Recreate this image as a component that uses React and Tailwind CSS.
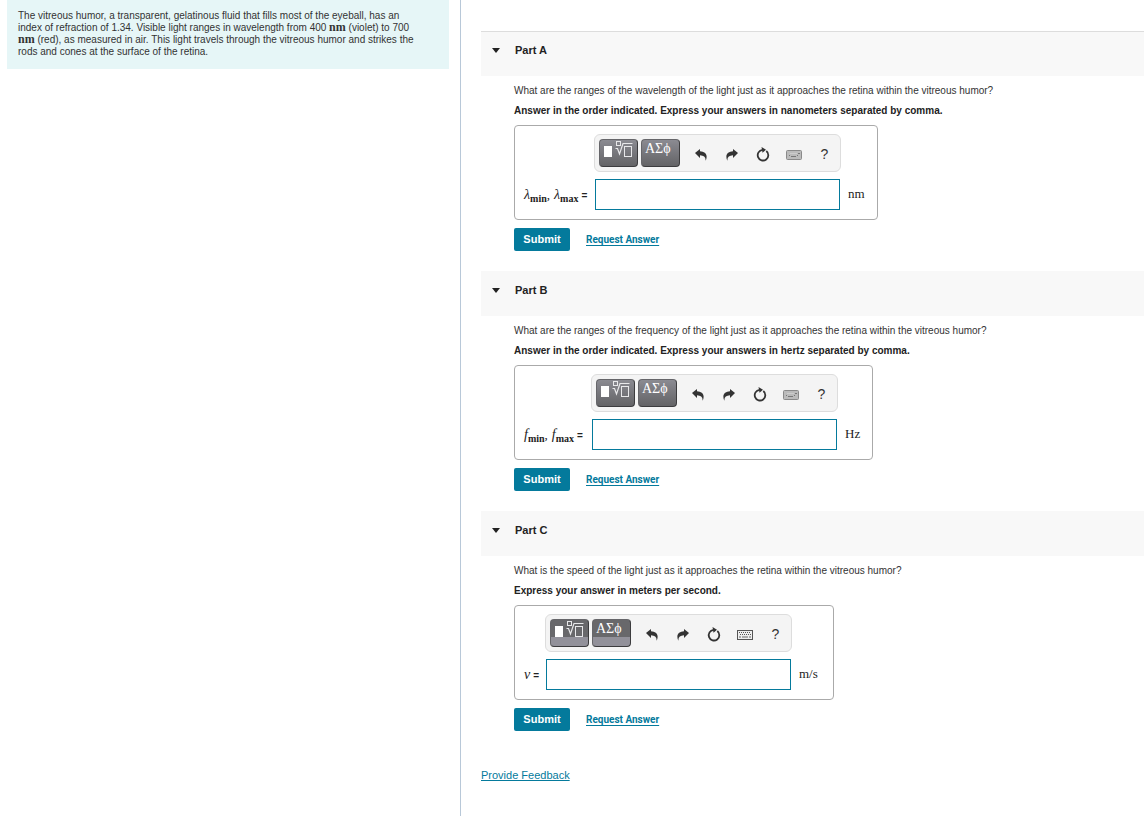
import clsx from "clsx";

const parts = [
  {
    id: "a",
    title: "Part A",
    question:
      "What are the ranges of the wavelength of the light just as it approaches the retina within the vitreous humor?",
    instructions:
      "Answer in the order indicated. Express your answers in nanometers separated by comma.",
    symbols: [
      { base: "λ", sub: "min" },
      { base: "λ", sub: "max" },
    ],
    labelWidth: "w-[70px]",
    unit: "nm",
    unitWidth: "w-[27px]",
  },
  {
    id: "b",
    title: "Part B",
    question:
      "What are the ranges of the frequency of the light just as it approaches the retina within the vitreous humor?",
    instructions:
      "Answer in the order indicated. Express your answers in hertz separated by comma.",
    symbols: [
      { base: "f", sub: "min" },
      { base: "f", sub: "max" },
    ],
    labelWidth: "w-[67px]",
    unit: "Hz",
    unitWidth: "w-[25px]",
  },
  {
    id: "c",
    title: "Part C",
    question:
      "What is the speed of the light just as it approaches the retina within the vitreous humor?",
    instructions: "Express your answer in meters per second.",
    symbols: [{ base: "v" }],
    labelWidth: "w-[21px]",
    unit: "m/s",
    unitWidth: "w-[32px]",
    fullKeyboard: true,
  },
];

function TemplatesIcon() {
  return (
    <svg width="30" height="20" viewBox="0 0 30 20" fill="none" stroke="#e8e8ea">
      <rect x="1" y="6" width="8" height="11" fill="#fff" stroke="none" />
      <rect x="13.5" y="1.5" width="4" height="4" />
      <path d="M12.5 8.500h2l2 5.500 3.500-10.500h9.500" strokeWidth="1.200" />
      <rect x="21.5" y="6.5" width="7" height="10" />
    </svg>
  );
}

function UndoIcon() {
  return (
    <svg width="12" height="12" viewBox="0 0 12 12" fill="#333">
      <path d="M0 4 5 0v2.200c5.200.2 8.400 3.600 5.600 9.800C11 8.400 9 6.500 5 6.300V9z" />
    </svg>
  );
}

function RedoIcon() {
  return (
    <svg width="12" height="12" viewBox="0 0 12 12" fill="#333">
      <path d="M12 4 7 0v2.200C1.800 2.400-1.400 5.800 1.400 12 1 8.400 3 6.500 7 6.300V9z" />
    </svg>
  );
}

function ResetIcon() {
  return (
    <svg width="14" height="15" viewBox="0 0 14 15" fill="none">
      <path d="M10.300 4A5.300 5.300 0 1 1 6.500 2.900" stroke="#333" strokeWidth="1.800" />
      <path d="M5.500 0 10 2.700 6.500 5.800z" fill="#333" />
    </svg>
  );
}

function KeyboardIcon({ full }) {
  if (full) {
    return (
      <svg width="16" height="10" viewBox="0 0 16 10" fill="none">
        <rect x=".5" y=".5" width="15" height="9" fill="#eee" stroke="#555" />
        <path d="M2 2.500h12M3 4.500h11" stroke="#555" strokeDasharray="1 1" />
        <path d="M2 7h2M5 7h6M12 7h2" stroke="#666" />
      </svg>
    );
  }
  return (
    <svg width="16" height="10" viewBox="0 0 16 10" fill="none">
      <rect x=".5" y=".5" width="15" height="9" rx="1" fill="#bbb" stroke="#8a8a8a" />
      <path d="M3 5.500h1M12 3.500h2M5 6.500h5M11 5.500h1" stroke="#777" />
      <path d="M4 3.500h7" stroke="#ccc" />
    </svg>
  );
}

function PaletteButton({ label, split, children }) {
  return (
    <button
      type="button"
      aria-label={label}
      className={clsx(
        "flex h-7 w-[39px] items-start justify-start rounded border border-[#3c3c3e] border-t-[#66666a] border-l-[#66666a] pl-[3px] text-white",
        split
          ? "bg-linear-to-b from-[#68686b] from-65% to-[#92919a] to-65%"
          : "bg-linear-to-b from-[#8b8b92] to-[#636366]"
      )}
    >
      {children}
    </button>
  );
}

function ToolButton({ label, children }) {
  return (
    <button
      type="button"
      aria-label={label}
      className="flex h-7 w-[31px] items-center justify-center pt-[3px] text-[#333]"
    >
      {children}
    </button>
  );
}

function Toolbar({ full }) {
  return (
    <div className="flex h-[38px] w-[247px] items-center rounded-md border border-[#ddd] bg-[#f4f4f4] pl-1">
      <div className="mr-[5px] flex gap-[3px]">
        <PaletteButton label="Templates" split={full}>
          <TemplatesIcon />
        </PaletteButton>
        <PaletteButton label="Symbols" split={full}>
          <span className="font-['Liberation_Serif',serif] text-[14px] leading-[18px]">ΑΣϕ</span>
        </PaletteButton>
      </div>
      <ToolButton label="Undo">
        <UndoIcon />
      </ToolButton>
      <ToolButton label="Redo">
        <RedoIcon />
      </ToolButton>
      <ToolButton label="Reset">
        <ResetIcon />
      </ToolButton>
      <ToolButton label="Keyboard shortcuts">
        <KeyboardIcon full={full} />
      </ToolButton>
      <ToolButton label="Help">
        <span className="text-[14px]">?</span>
      </ToolButton>
    </div>
  );
}

function MathLabel({ symbols }) {
  return (
    <>
      {symbols.map((s, i) => (
        <span key={i} className="font-['Liberation_Serif',serif]">
          <i className="text-[14px]">{s.base}</i>
          {s.sub && <sub className="bottom-[-3px] text-[10px] font-bold">{s.sub}</sub>}
          {i < symbols.length - 1 && <span className="mr-1 text-[13px]">,</span>}
        </span>
      ))}
      <span className="ml-[3px] text-[10px] font-bold">=</span>
    </>
  );
}

function AnswerBox({ part }) {
  return (
    <div className="flex w-fit items-end rounded border border-[#aaa] px-[9px] pt-2 pb-[9px]">
      <label
        htmlFor={`answer-${part.id}`}
        className={clsx("flex h-8 shrink-0 items-center pb-px whitespace-nowrap text-[#222]", part.labelWidth)}
      >
        <span>
          <MathLabel symbols={part.symbols} />
        </span>
      </label>
      <div>
        <Toolbar full={part.fullKeyboard} />
        <input
          id={`answer-${part.id}`}
          type="text"
          className="mx-px mt-[7px] block h-[31px] w-[245px] border border-[#047a9c] bg-white px-2 text-sm outline-none"
        />
      </div>
      <span
        className={clsx(
          "flex h-8 items-center pb-px pl-[7px] font-['Liberation_Serif',serif] text-[13px] text-[#222]",
          part.unitWidth
        )}
      >
        {part.unit}
      </span>
    </div>
  );
}

function Part({ part }) {
  return (
    <section className="mb-5 border-t border-[#f8f8f8] first:border-[#ddd]">
      <h2 className="flex h-11 items-start bg-[#f8f8f8] pt-[10px] pl-[11px] text-[11px] leading-4 font-bold text-[#222]">
        <button type="button" className="flex items-center gap-[15px]">
          <svg width="8" height="5" viewBox="0 0 8 5" fill="#222">
            <path d="M0 0h8L4 5z" />
          </svg>
          {part.title}
        </button>
      </h2>
      <div className="pl-[33px]">
        <p className="mt-[9px] text-[10px] leading-3">{part.question}</p>
        <p className="my-2 text-[10px] leading-3 font-bold text-[#222]">{part.instructions}</p>
        <AnswerBox part={part} />
        <div className="mt-2 flex items-center gap-4">
          <button type="button" className="h-[23px] w-14 rounded-xs bg-[#047a9c] text-[11px] font-bold text-white">
            Submit
          </button>
          <a
            href="#request"
            className="font-[Roboto,sans-serif] text-[10px] font-bold text-[#047a9c] underline underline-offset-2"
          >
            Request Answer
          </a>
        </div>
      </div>
    </section>
  );
}

function Unit({ children }) {
  return <span className="font-['Liberation_Serif',serif] text-[12px] leading-[10px] font-bold">{children}</span>;
}

export default function App() {
  return (
    <div className="grid min-h-screen grid-cols-[461px_minmax(0,1fr)] bg-white font-['Liberation_Sans',Arial,sans-serif] text-[#333]">
      <aside className="border-r border-[#b8c8d8] pr-[11px] pl-[7px]">
        <p className="bg-[#e6f6f7] px-[11px] pt-[10px] pb-[11px] text-[10px] leading-3">
          The vitreous humor, a transparent, gelatinous fluid that fills most of the eyeball, has an
          <br />
          index of refraction of 1.34. Visible light ranges in wavelength from 400 <Unit>nm</Unit> (violet) to 700
          <br />
          <Unit>nm</Unit> (red), as measured in air. This light travels through the vitreous humor and strikes the
          <br />
          rods and cones at the surface of the retina.
        </p>
      </aside>
      <main className="pt-[31px] pl-5">
        <div>
          {parts.map((part) => (
            <Part key={part.id} part={part} />
          ))}
        </div>
        <a href="#feedback" className="mt-4 inline-block text-[11px] leading-4 text-[#047a9c] underline">
          Provide Feedback
        </a>
      </main>
    </div>
  );
}
